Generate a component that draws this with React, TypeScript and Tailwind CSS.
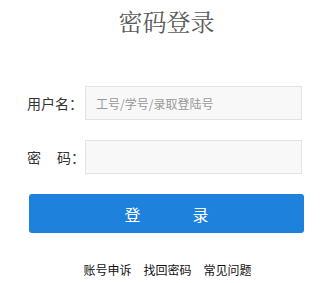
import React from 'react';

const cjk = { fontFamily: '"Microsoft YaHei", "Noto Sans CJK SC", "Liberation Sans", sans-serif' };

export default function App() {
  return (
    <div className="w-[324px] h-[283px] bg-white" style={cjk}>
      <div className="ml-[27px] w-[277px]">
        <div
          className="h-[42px] flex items-center justify-center text-[24px] leading-none text-[#5a5a5a] pl-[2px]"
          style={{ fontFamily: '"Noto Serif CJK SC", "SimSun", "Noto Sans CJK SC", serif' }}
        >
          密码登录
        </div>

        <div className="mt-[44px] flex items-center">
          <label className="w-[58px] text-[14px] text-[#333]">用户名：</label>
          <input
            type="text"
            placeholder="工号/学号/录取登陆号"
            className="w-[217px] h-[34px] border border-[#e3e3e3] bg-[#f8f8f8] px-[10px] text-[12px] text-[#333] placeholder:text-[#999] outline-none"
          />
        </div>

        <div className="mt-[20px] flex items-center">
          <label className="w-[58px] text-[14px] text-[#333]">
            密<span className="inline-block w-[16px]" />码：
          </label>
          <input
            type="password"
            className="w-[217px] h-[34px] border border-[#e3e3e3] bg-[#f8f8f8] px-[10px] text-[12px] outline-none"
          />
        </div>

        <button className="mt-[20px] ml-[2px] w-[275px] h-[39px] rounded-[3px] bg-[#1e81dc] text-white text-[16px] flex items-center justify-center gap-[52px]">
          <span>登</span>
          <span>录</span>
        </button>

        <div className="mt-[29px] h-[16px] flex items-center justify-center gap-[12px] text-[12px] text-[#111] pl-[4px]">
          <a href="#">账号申诉</a>
          <a href="#">找回密码</a>
          <a href="#">常见问题</a>
        </div>
      </div>
    </div>
  );
}
